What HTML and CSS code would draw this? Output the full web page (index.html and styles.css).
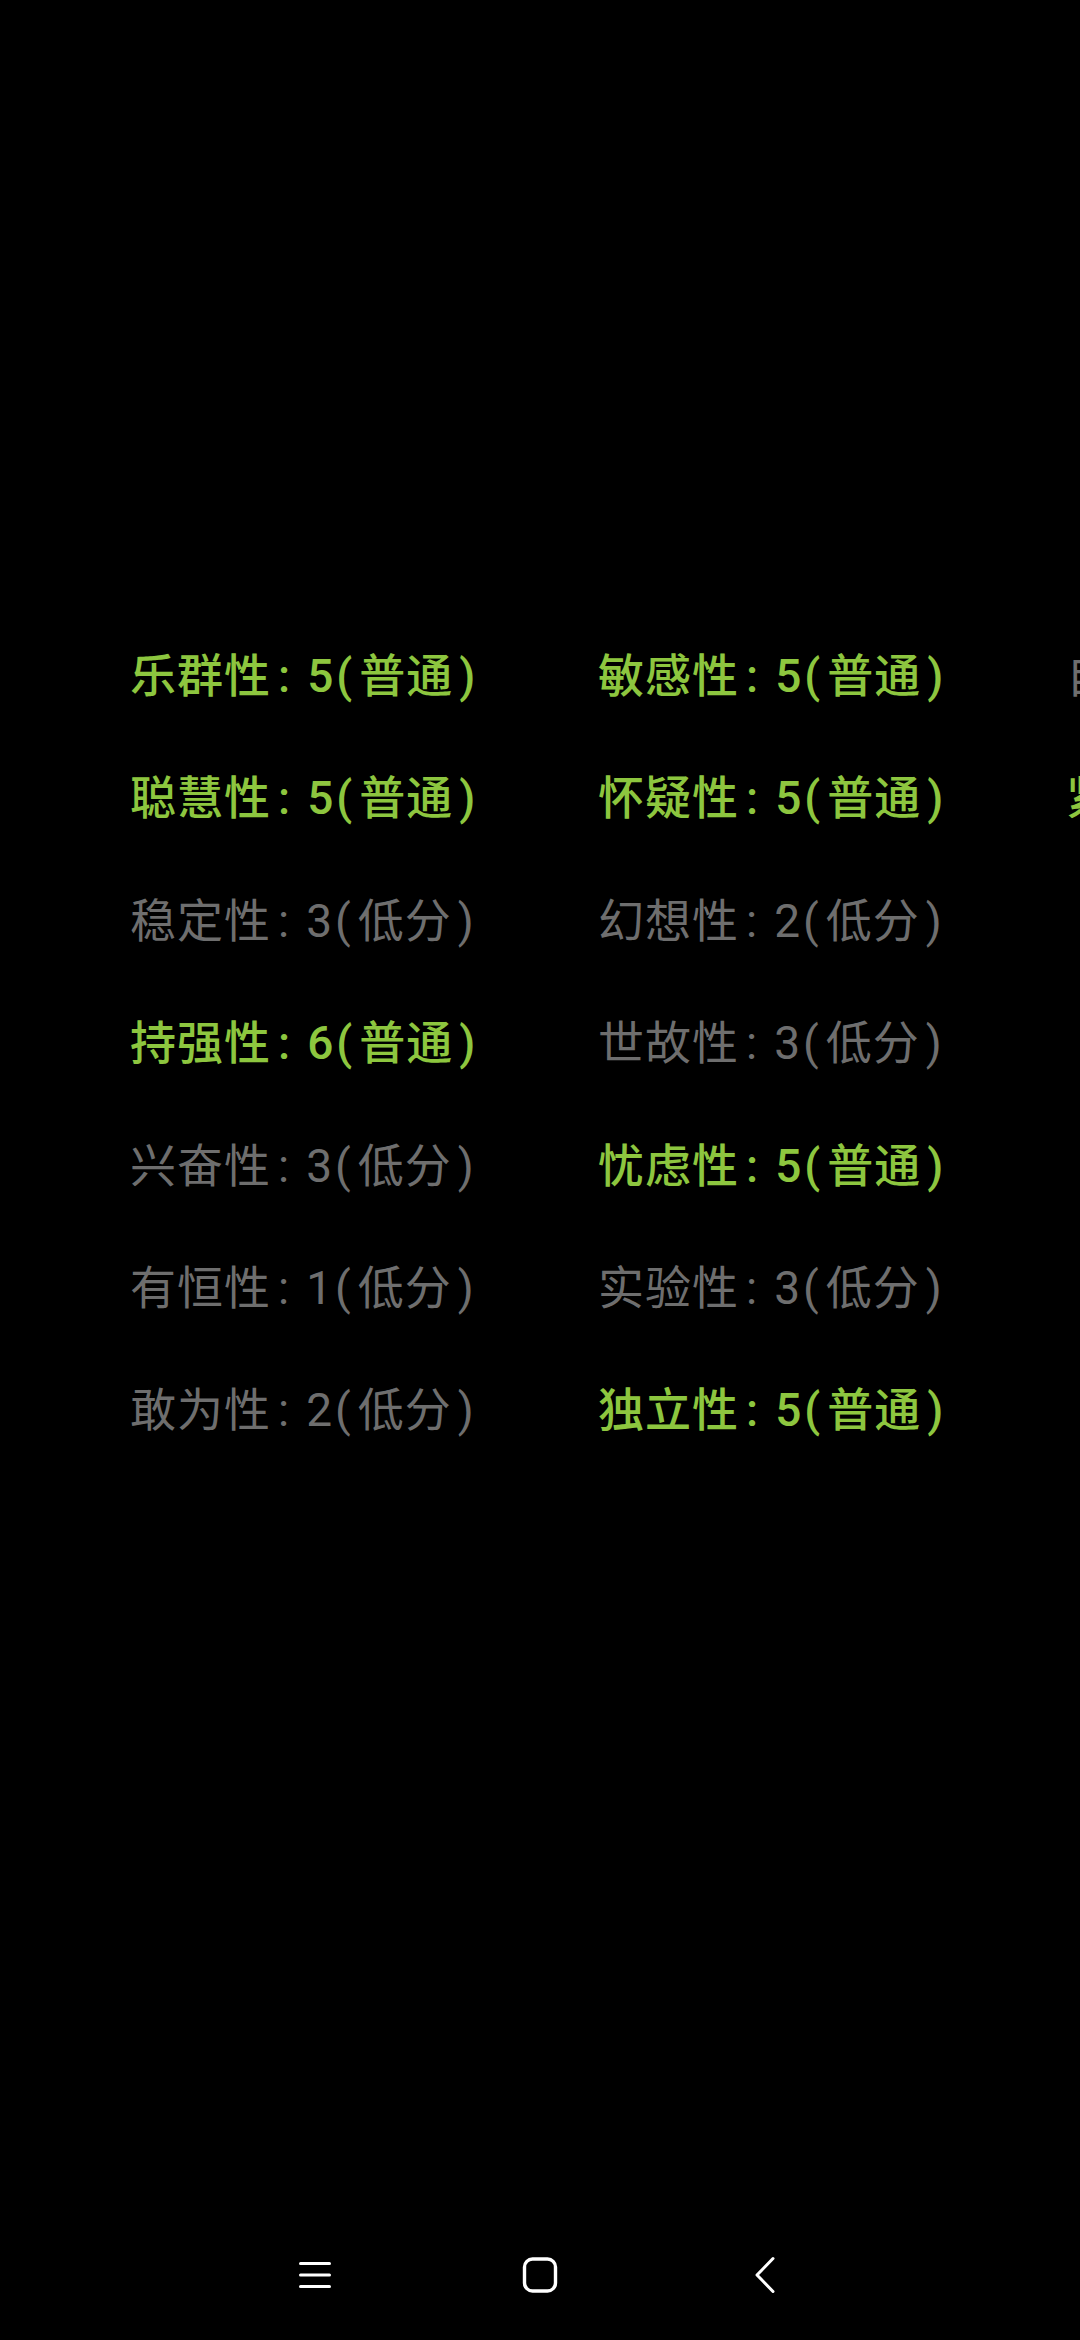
FILE: index.html
```html
<!DOCTYPE html>
<html lang="zh-CN">
<head>
<meta charset="utf-8">
<title>16PF</title>
<link rel="stylesheet" href="styles.css">
</head>
<body>
<div class="screen">
  <main class="content">
    <div class="grid">
      <div class="item hi">乐群性<span class="colon">:</span>5<span class="lp">(</span>普通<span class="rp">)</span></div>
      <div class="item hi">聪慧性<span class="colon">:</span>5<span class="lp">(</span>普通<span class="rp">)</span></div>
      <div class="item lo">稳定性<span class="colon">:</span>3<span class="lp">(</span>低分<span class="rp">)</span></div>
      <div class="item hi">持强性<span class="colon">:</span>6<span class="lp">(</span>普通<span class="rp">)</span></div>
      <div class="item lo">兴奋性<span class="colon">:</span>3<span class="lp">(</span>低分<span class="rp">)</span></div>
      <div class="item lo">有恒性<span class="colon">:</span>1<span class="lp">(</span>低分<span class="rp">)</span></div>
      <div class="item lo">敢为性<span class="colon">:</span>2<span class="lp">(</span>低分<span class="rp">)</span></div>
      <div class="item hi">敏感性<span class="colon">:</span>5<span class="lp">(</span>普通<span class="rp">)</span></div>
      <div class="item hi">怀疑性<span class="colon">:</span>5<span class="lp">(</span>普通<span class="rp">)</span></div>
      <div class="item lo">幻想性<span class="colon">:</span>2<span class="lp">(</span>低分<span class="rp">)</span></div>
      <div class="item lo">世故性<span class="colon">:</span>3<span class="lp">(</span>低分<span class="rp">)</span></div>
      <div class="item hi">忧虑性<span class="colon">:</span>5<span class="lp">(</span>普通<span class="rp">)</span></div>
      <div class="item lo">实验性<span class="colon">:</span>3<span class="lp">(</span>低分<span class="rp">)</span></div>
      <div class="item hi">独立性<span class="colon">:</span>5<span class="lp">(</span>普通<span class="rp">)</span></div>
      <div class="item lo">自律性<span class="colon">:</span>3<span class="lp">(</span>低分<span class="rp">)</span></div>
      <div class="item hi">紧张性<span class="colon">:</span>5<span class="lp">(</span>普通<span class="rp">)</span></div>
    </div>
  </main>
  <nav class="navbar">
    <div class="nav-btn">
      <svg width="34" height="30" viewBox="0 0 34 30"><g stroke="#fff" stroke-width="3" stroke-linecap="round"><line x1="2.5" y1="3.5" x2="31.5" y2="3.5"/><line x1="2.5" y1="15" x2="31.5" y2="15"/><line x1="2.5" y1="26.5" x2="31.5" y2="26.5"/></g></svg>
    </div>
    <div class="nav-btn">
      <svg width="36" height="36" viewBox="0 0 36 36"><rect x="2.5" y="2" width="31" height="32" rx="8" fill="none" stroke="#fff" stroke-width="3.4"/></svg>
    </div>
    <div class="nav-btn">
      <svg width="24" height="40" viewBox="0 0 24 40"><polyline points="20,3.5 4,20 20,36.5" fill="none" stroke="#fff" stroke-width="3" stroke-linecap="round" stroke-linejoin="round"/></svg>
    </div>
  </nav>
</div>
</body>
</html>
```
FILE: styles.css
```css
html, body {
  margin: 0;
  padding: 0;
  background: #000;
}
.screen {
  width: 1080px;
  height: 2340px;
  display: flex;
  flex-direction: column;
  background: #000;
  overflow: hidden;
  font-family: Roboto, "Noto Sans CJK SC", sans-serif;
}
.content {
  flex: 1;
  padding-top: 615px;
  overflow: hidden;
}
.grid {
  display: grid;
  grid-auto-flow: column;
  grid-template-rows: repeat(7, 122.4px);
  grid-auto-columns: 468px;
  padding-left: 130px;
  width: max-content;
}
.item {
  font-size: 46px;
  letter-spacing: 1px;
  line-height: 122.4px;
  white-space: nowrap;
}
.colon {
  margin: 0 16px 0 7px;
}
.lp {
  margin: 0 6px 0 2px;
}
.rp {
  margin-left: 6px;
}
.hi {
  color: #8dc63f;
  font-weight: 500;
}
.lo {
  color: #6e6e6e;
}
.navbar {
  height: 130px;
  display: flex;
  align-items: center;
  justify-content: center;
}
.nav-btn {
  width: 225px;
  height: 130px;
  display: flex;
  align-items: center;
  justify-content: center;
}
```
